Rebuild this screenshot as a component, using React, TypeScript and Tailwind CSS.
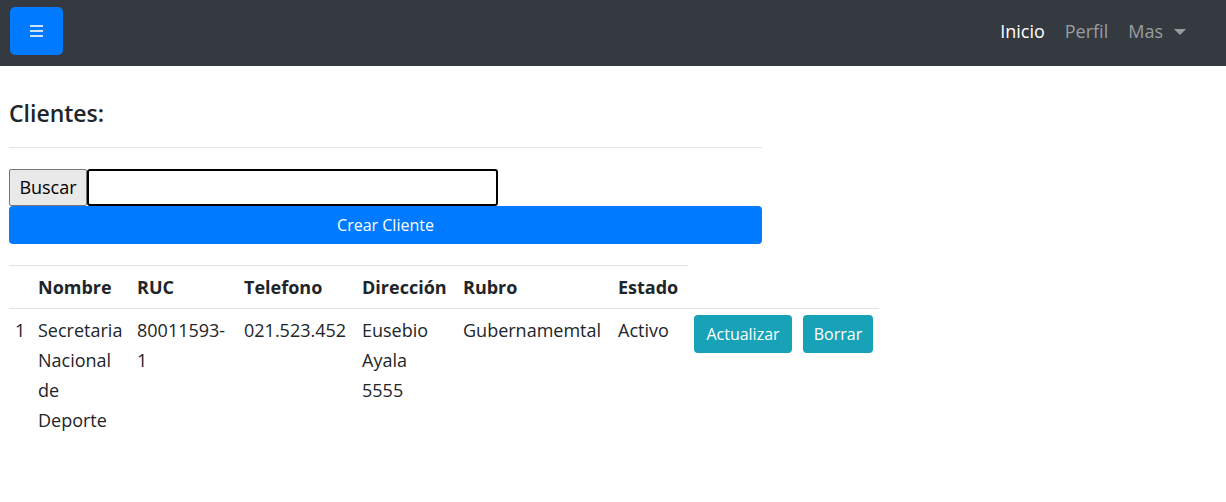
import { useState } from 'react';

const font = { fontFamily: '"Open Sans", "Noto Sans", sans-serif' };

function Navbar() {
  return (
    <nav className="flex h-[66px] items-start bg-[#343a40] px-[10px] pt-[7px]">
      <button className="flex h-[48px] w-[53px] flex-col items-center justify-center gap-[3px] rounded-[5px] bg-[#007bff]">
        <span className="block h-[2px] w-[13px] bg-[#cfe3ff]" />
        <span className="block h-[2px] w-[13px] bg-[#cfe3ff]" />
        <span className="block h-[2px] w-[13px] bg-[#cfe3ff]" />
      </button>
      <ul className="ml-auto flex h-[48px] items-center gap-[20px] pr-[30px] text-[18px]">
        <li className="text-white">Inicio</li>
        <li className="text-[#9a9da0]">Perfil</li>
        <li className="flex items-center gap-[11px] text-[#9a9da0]">
          Mas
          <span className="mt-[1px] h-0 w-0 border-x-[6px] border-t-[6px] border-x-transparent border-t-[#9a9da0]" />
        </li>
      </ul>
    </nav>
  );
}

const headers = ['', 'Nombre', 'RUC', 'Telefono', 'Dirección', 'Rubro', 'Estado'];
const widths = [23, 99, 107, 118, 101, 155, 76, 109, 82];

const clientes = [
  {
    id: 1,
    nombre: 'Secretaria Nacional de Deporte',
    ruc: '80011593-1',
    telefono: '021.523.452',
    direccion: 'Eusebio Ayala 5555',
    rubro: 'Gubernamemtal',
    estado: 'Activo',
  },
];

export default function App() {
  const [buscar, setBuscar] = useState('');

  return (
    <div className="min-h-[502px] bg-white text-[#212529]" style={font}>
      <Navbar />
      <main className="px-[9px]">
        <h5 className="mt-[32px] text-[23px] leading-[30px] font-semibold">Clientes:</h5>
        <hr className="mt-[19px] w-[753px] border-t border-[#e5e5e5]" />
        <div className="mt-[21px] flex h-[37px]">
          <button className="h-[37px] w-[78px] rounded-[2px] border border-[#767676] bg-[#e9e9e9] text-[18px] text-black">
            Buscar
          </button>
          <input
            autoFocus
            value={buscar}
            onChange={(e) => setBuscar(e.target.value)}
            className="h-[37px] w-[411px] rounded-[3px] border-2 border-black px-[3px] text-[18px] outline-none"
          />
        </div>
        <button className="flex h-[38px] w-[753px] items-center justify-center rounded-[4px] bg-[#007bff] text-[16px] text-white">
          Crear Cliente
        </button>

        <table className="mt-[21px] w-[870px] table-fixed border-collapse text-left text-[18px] leading-[30px]">
          <colgroup>
            {widths.map((w, i) => (
              <col key={i} style={{ width: w }} />
            ))}
          </colgroup>
          <thead>
            <tr>
              {headers.map((h, i) => (
                <th key={i} className="border-t border-[#dee2e6] p-[6px] align-bottom font-bold">
                  {h}
                </th>
              ))}
            </tr>
          </thead>
          <tbody>
            {clientes.map((c) => (
              <tr key={c.id}>
                <td className="border-t border-[#dee2e6] p-[6px] align-top">{c.id}</td>
                <td className="border-t border-[#dee2e6] p-[6px] align-top">{c.nombre}</td>
                <td className="border-t border-[#dee2e6] p-[6px] align-top">{c.ruc}</td>
                <td className="border-t border-[#dee2e6] p-[6px] align-top">{c.telefono}</td>
                <td className="border-t border-[#dee2e6] p-[6px] align-top">{c.direccion}</td>
                <td className="border-t border-[#dee2e6] p-[6px] align-top">{c.rubro}</td>
                <td className="border-t border-[#dee2e6] p-[6px] align-top">{c.estado}</td>
                <td className="border-t border-[#dee2e6] p-[6px] align-top">
                  <button className="h-[38px] w-[98px] rounded-[4px] bg-[#17a2b8] text-[16px] leading-[38px] text-white">
                    Actualizar
                  </button>
                </td>
                <td className="border-t border-[#dee2e6] p-[6px] align-top">
                  <button className="h-[38px] w-[70px] rounded-[4px] bg-[#17a2b8] text-[16px] leading-[38px] text-white">
                    Borrar
                  </button>
                </td>
              </tr>
            ))}
          </tbody>
        </table>
      </main>
    </div>
  );
}
